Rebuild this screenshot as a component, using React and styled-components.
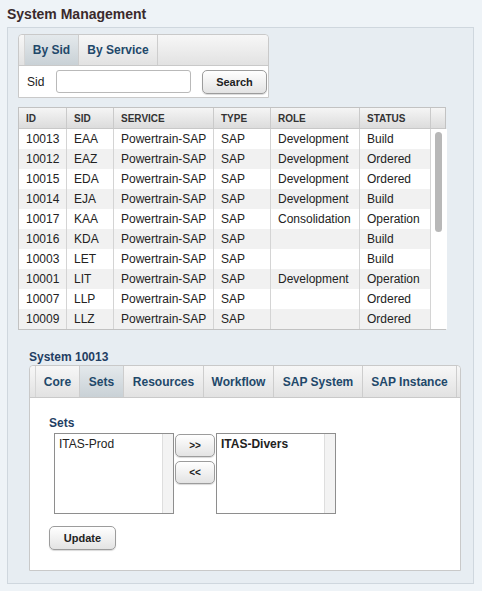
import React from "react";
import styled, { createGlobalStyle } from "styled-components";

const Global = createGlobalStyle`
  html, body { margin: 0; padding: 0; background: #eef3f7; }
  body { font-family: "Liberation Sans", Arial, Helvetica, sans-serif; color: #222; }
  * { box-sizing: border-box; }
`;

const Page = styled.div`
  width: 482px;
  height: 591px;
  padding: 5px 8px 0 7px;
  background: #eef3f7;
`;

const Title = styled.h1`
  margin: 0;
  font-size: 14px;
  line-height: 18px;
  font-weight: bold;
  color: #3a2a2c;
  height: 22px;
`;

const Panel = styled.div`
  background: #e7edf2;
  border: 1px solid #cfd7de;
  padding: 6px 12px 12px 10px;
  display: flex;
  flex-direction: column;
`;

const TabBox = styled.div`
  width: ${(p) => p.$w}px;
  border: 1px solid #c9c9c9;
  border-radius: 4px 4px 0 0;
  background: #fff;
  margin-left: ${(p) => p.$ml || 0}px;
`;

const TabBar = styled.div`
  height: ${(p) => p.$h}px;
  display: flex;
  padding-left: 5px;
  background: linear-gradient(#f7f7f7, #e2e2e2);
  border-bottom: 1px solid #c9c9c9;
  border-radius: 4px 4px 0 0;
`;

const Tab = styled.div`
  width: ${(p) => p.$w}px;
  display: flex;
  align-items: center;
  justify-content: center;
  font-size: 12px;
  font-weight: bold;
  color: #22486a;
  border-right: 1px solid #cdcdcd;
  border-left: ${(p) => (p.$first ? "1px solid #d5d5d5" : "none")};
  background: ${(p) =>
    p.$active ? "linear-gradient(#e4e9ec, #c9d1d6)" : "transparent"};
`;

const SearchRow = styled.div`
  height: 31px;
  display: flex;
  align-items: center;
  padding-left: 8px;
`;

const Label = styled.span`
  font-size: 12px;
  color: #222;
  width: 29px;
`;

const Input = styled.div`
  width: 135px;
  height: 23px;
  border: 1px solid #b9b9b9;
  border-radius: 3px;
  background: #fff;
  margin-right: 11px;
`;

const Button = styled.div`
  width: ${(p) => p.$w}px;
  height: ${(p) => p.$h || 24}px;
  display: flex;
  align-items: center;
  justify-content: center;
  border: 1px solid #9c9c9c;
  border-radius: 5px;
  background: linear-gradient(#ffffff, #e3e3e3);
  box-shadow: 0 1px 1px rgba(0, 0, 0, 0.15);
  font-size: ${(p) => p.$fs || 11}px;
  font-weight: bold;
  color: #222;
`;

const Grid = styled.div`
  margin-top: 9px;
  width: 428px;
  border: 1px solid #c2c2c2;
  background: #fff;
`;

const HeaderRow = styled.div`
  display: flex;
  height: 21px;
  background: linear-gradient(#f5f5f5, #dcdcdc);
  border-bottom: 1px solid #c8c8c8;
`;

const HeadCell = styled.div`
  width: ${(p) => p.$w}px;
  flex: none;
  display: flex;
  align-items: center;
  padding-left: 7px;
  font-size: 10px;
  font-weight: bold;
  color: #333;
  border-right: ${(p) => (p.$last ? "none" : "1px solid #cacaca")};
`;

const Body = styled.div`
  display: flex;
`;

const Rows = styled.div`
  display: flex;
  flex-direction: column;
`;

const Row = styled.div`
  display: flex;
  height: 20px;
  background: ${(p) => (p.$odd ? "#f1f1f1" : "#fff")};
`;

const Cell = styled.div`
  width: ${(p) => p.$w}px;
  flex: none;
  display: flex;
  align-items: center;
  padding-left: 7px;
  font-size: 12px;
  color: #222;
  white-space: nowrap;
  border-right: 1px solid #d4d4d4;
`;

const ScrollTrack = styled.div`
  width: 16px;
  flex: none;
  padding: 3px 0 0 4px;
  background: #fff;
`;

const Thumb = styled.div`
  width: 7px;
  height: 100px;
  border-radius: 4px;
  background: #b8b8b8;
`;

const SectionTitle = styled.div`
  margin: ${(p) => p.$m};
  font-size: 12px;
  line-height: 14px;
  font-weight: bold;
  color: #1f3e63;
`;

const Content = styled.div`
  padding: 18px 20px 20px 19px;
  background: #fff;
`;

const Transfer = styled.div`
  display: flex;
  gap: 1px;
  margin: 3px 0 12px 5px;
`;

const ListBox = styled.div`
  width: 120px;
  height: 81px;
  border: 1px solid #8e8e8e;
  display: flex;
  background: #fff;
`;

const ListItems = styled.div`
  flex: 1;
  padding: 3px 4px;
  font-size: 12px;
  font-weight: ${(p) => (p.$bold ? "bold" : "normal")};
  color: #222;
`;

const ListScroll = styled.div`
  width: 11px;
  background: #f3f3f3;
  border-left: 1px solid #dedede;
`;

const ButtonCol = styled.div`
  display: flex;
  flex-direction: column;
  gap: 4px;
  padding-top: 1px;
`;

const cols = [48, 47, 100, 57, 89, 71];
const heads = ["ID", "SID", "SERVICE", "TYPE", "ROLE", "STATUS"];
const data = [
  ["10013", "EAA", "Powertrain-SAP", "SAP", "Development", "Build"],
  ["10012", "EAZ", "Powertrain-SAP", "SAP", "Development", "Ordered"],
  ["10015", "EDA", "Powertrain-SAP", "SAP", "Development", "Ordered"],
  ["10014", "EJA", "Powertrain-SAP", "SAP", "Development", "Build"],
  ["10017", "KAA", "Powertrain-SAP", "SAP", "Consolidation", "Operation"],
  ["10016", "KDA", "Powertrain-SAP", "SAP", "", "Build"],
  ["10003", "LET", "Powertrain-SAP", "SAP", "", "Build"],
  ["10001", "LIT", "Powertrain-SAP", "SAP", "Development", "Operation"],
  ["10007", "LLP", "Powertrain-SAP", "SAP", "", "Ordered"],
  ["10009", "LLZ", "Powertrain-SAP", "SAP", "", "Ordered"],
];

const detailTabs = [
  ["Core", 45],
  ["Sets", 44, true],
  ["Resources", 80],
  ["Workflow", 70],
  ["SAP System", 89],
  ["SAP Instance", 94],
];

export default function App() {
  return (
    <>
      <Global />
      <Page>
        <Title>System Management</Title>
        <Panel>
          <TabBox $w={251}>
            <TabBar $h={31}>
              <Tab $w={55} $active $first>By Sid</Tab>
              <Tab $w={79}>By Service</Tab>
            </TabBar>
            <SearchRow>
              <Label>Sid</Label>
              <Input />
              <Button $w={65}>Search</Button>
            </SearchRow>
          </TabBox>

          <Grid>
            <HeaderRow>
              {heads.map((h, i) => (
                <HeadCell key={h} $w={cols[i]}>{h}</HeadCell>
              ))}
              <HeadCell $w={14} $last />
            </HeaderRow>
            <Body>
              <Rows>
                {data.map((r, ri) => (
                  <Row key={r[0]} $odd={ri % 2 === 1}>
                    {r.map((c, ci) => (
                      <Cell key={ci} $w={cols[ci]}>{c}</Cell>
                    ))}
                  </Row>
                ))}
              </Rows>
              <ScrollTrack>
                <Thumb />
              </ScrollTrack>
            </Body>
          </Grid>

          <SectionTitle $m="20px 0 1px 11px">System 10013</SectionTitle>
          <TabBox $w={432} $ml={11}>
            <TabBar $h={32}>
              {detailTabs.map(([t, w, a], i) => (
                <Tab key={t} $w={w} $active={a} $first={i === 0}>{t}</Tab>
              ))}
            </TabBar>
            <Content>
              <SectionTitle $m="0">Sets</SectionTitle>
              <Transfer>
                <ListBox>
                  <ListItems>ITAS-Prod</ListItems>
                  <ListScroll />
                </ListBox>
                <ButtonCol>
                  <Button $w={40} $h={23} $fs={10}>&gt;&gt;</Button>
                  <Button $w={40} $h={23} $fs={10}>&lt;&lt;</Button>
                </ButtonCol>
                <ListBox>
                  <ListItems $bold>ITAS-Divers</ListItems>
                  <ListScroll />
                </ListBox>
              </Transfer>
              <Button $w={67} $fs={11}>Update</Button>
            </Content>
          </TabBox>
        </Panel>
      </Page>
    </>
  );
}
